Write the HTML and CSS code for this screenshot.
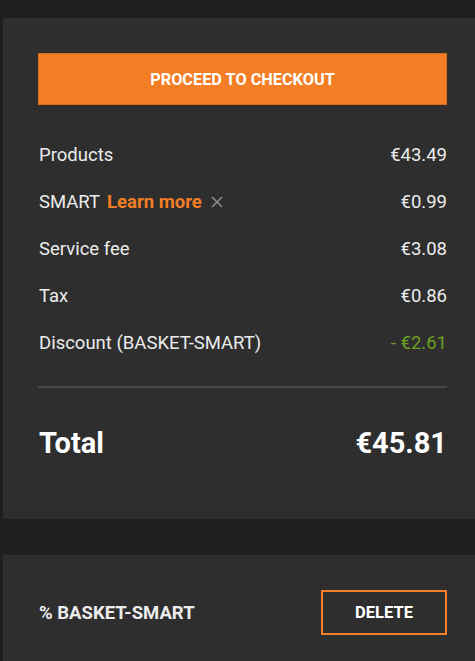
FILE: index.html
```html
<!DOCTYPE html>
<html lang="en">
<head>
<meta charset="UTF-8" />
<meta name="viewport" content="width=device-width, initial-scale=1.0" />
<title>Basket summary</title>
<link rel="stylesheet" href="styles.css">
</head>
<body>

<div class="card summary">
  <button class="checkout">Proceed to checkout</button>

  <div class="lines">
    <div class="line">
      <span>Products</span>
      <span>€43.49</span>
    </div>
    <div class="line">
      <span class="smart">SMART <a class="learn" href="#">Learn more</a>
        <svg class="close" width="12" height="12" viewBox="0 0 12 12"><path d="M1 1L11 11M11 1L1 11" stroke="#8e8e8e" stroke-width="1.5"/></svg>
      </span>
      <span>€0.99</span>
    </div>
    <div class="line">
      <span>Service fee</span>
      <span>€3.08</span>
    </div>
    <div class="line">
      <span>Tax</span>
      <span>€0.86</span>
    </div>
    <div class="line">
      <span>Discount (BASKET-SMART)</span>
      <span class="discount">- €2.61</span>
    </div>
  </div>

  <hr class="divider" />

  <div class="total">
    <span>Total</span>
    <span>€45.81</span>
  </div>
</div>

<div class="card voucher">
  <span class="code">% BASKET-SMART</span>
  <button class="delete">Delete</button>
</div>

</body>
</html>
```

FILE: styles.css
```css
* {
  box-sizing: border-box;
  margin: 0;
  padding: 0;
}

body {
  font-family: Roboto, 'Liberation Sans', sans-serif;
  background: #1f1f1f;
  color: #ececec;
  padding-top: 18px;
  overflow: hidden;
}

.card {
  background: #2e2e2e;
  margin-left: 3px;
  padding: 35px 28px 21px 35px;
}

/* Orange checkout button */
.checkout {
  display: block;
  width: 100%;
  height: 52px;
  background: #f47e25;
  border: 1px solid #d96c1c;
  color: #fff;
  font-family: inherit;
  font-size: 16.3px;
  font-weight: 700;
  text-transform: uppercase;
  cursor: pointer;
}

.lines {
  margin-top: 26px;
}

.line {
  height: 47px;
  display: flex;
  align-items: center;
  justify-content: space-between;
  font-size: 18.5px;
  padding-left: 1px;
}

.smart {
  display: flex;
  align-items: center;
}

.learn {
  color: #f47e25;
  font-weight: 700;
  text-decoration: none;
  margin-left: 7px;
}

.close {
  margin-left: 9px;
}

.discount {
  color: #6c9f22;
}

.divider {
  border: none;
  height: 2px;
  background: #474747;
  margin-top: 20px;
}

.total {
  height: 110px;
  display: flex;
  align-items: center;
  justify-content: space-between;
  font-size: 29px;
  font-weight: 700;
  color: #fff;
  padding-left: 1px;
}

.voucher {
  margin-top: 36px;
  display: flex;
  align-items: center;
  justify-content: space-between;
  padding-bottom: 30px;
}

.code {
  font-size: 18.5px;
  font-weight: 700;
  padding-left: 1px;
}

.delete {
  width: 126px;
  height: 45px;
  background: transparent;
  border: 2px solid #f47e25;
  color: #fff;
  font-family: inherit;
  font-size: 16.5px;
  font-weight: 700;
  text-transform: uppercase;
  cursor: pointer;
}
```
